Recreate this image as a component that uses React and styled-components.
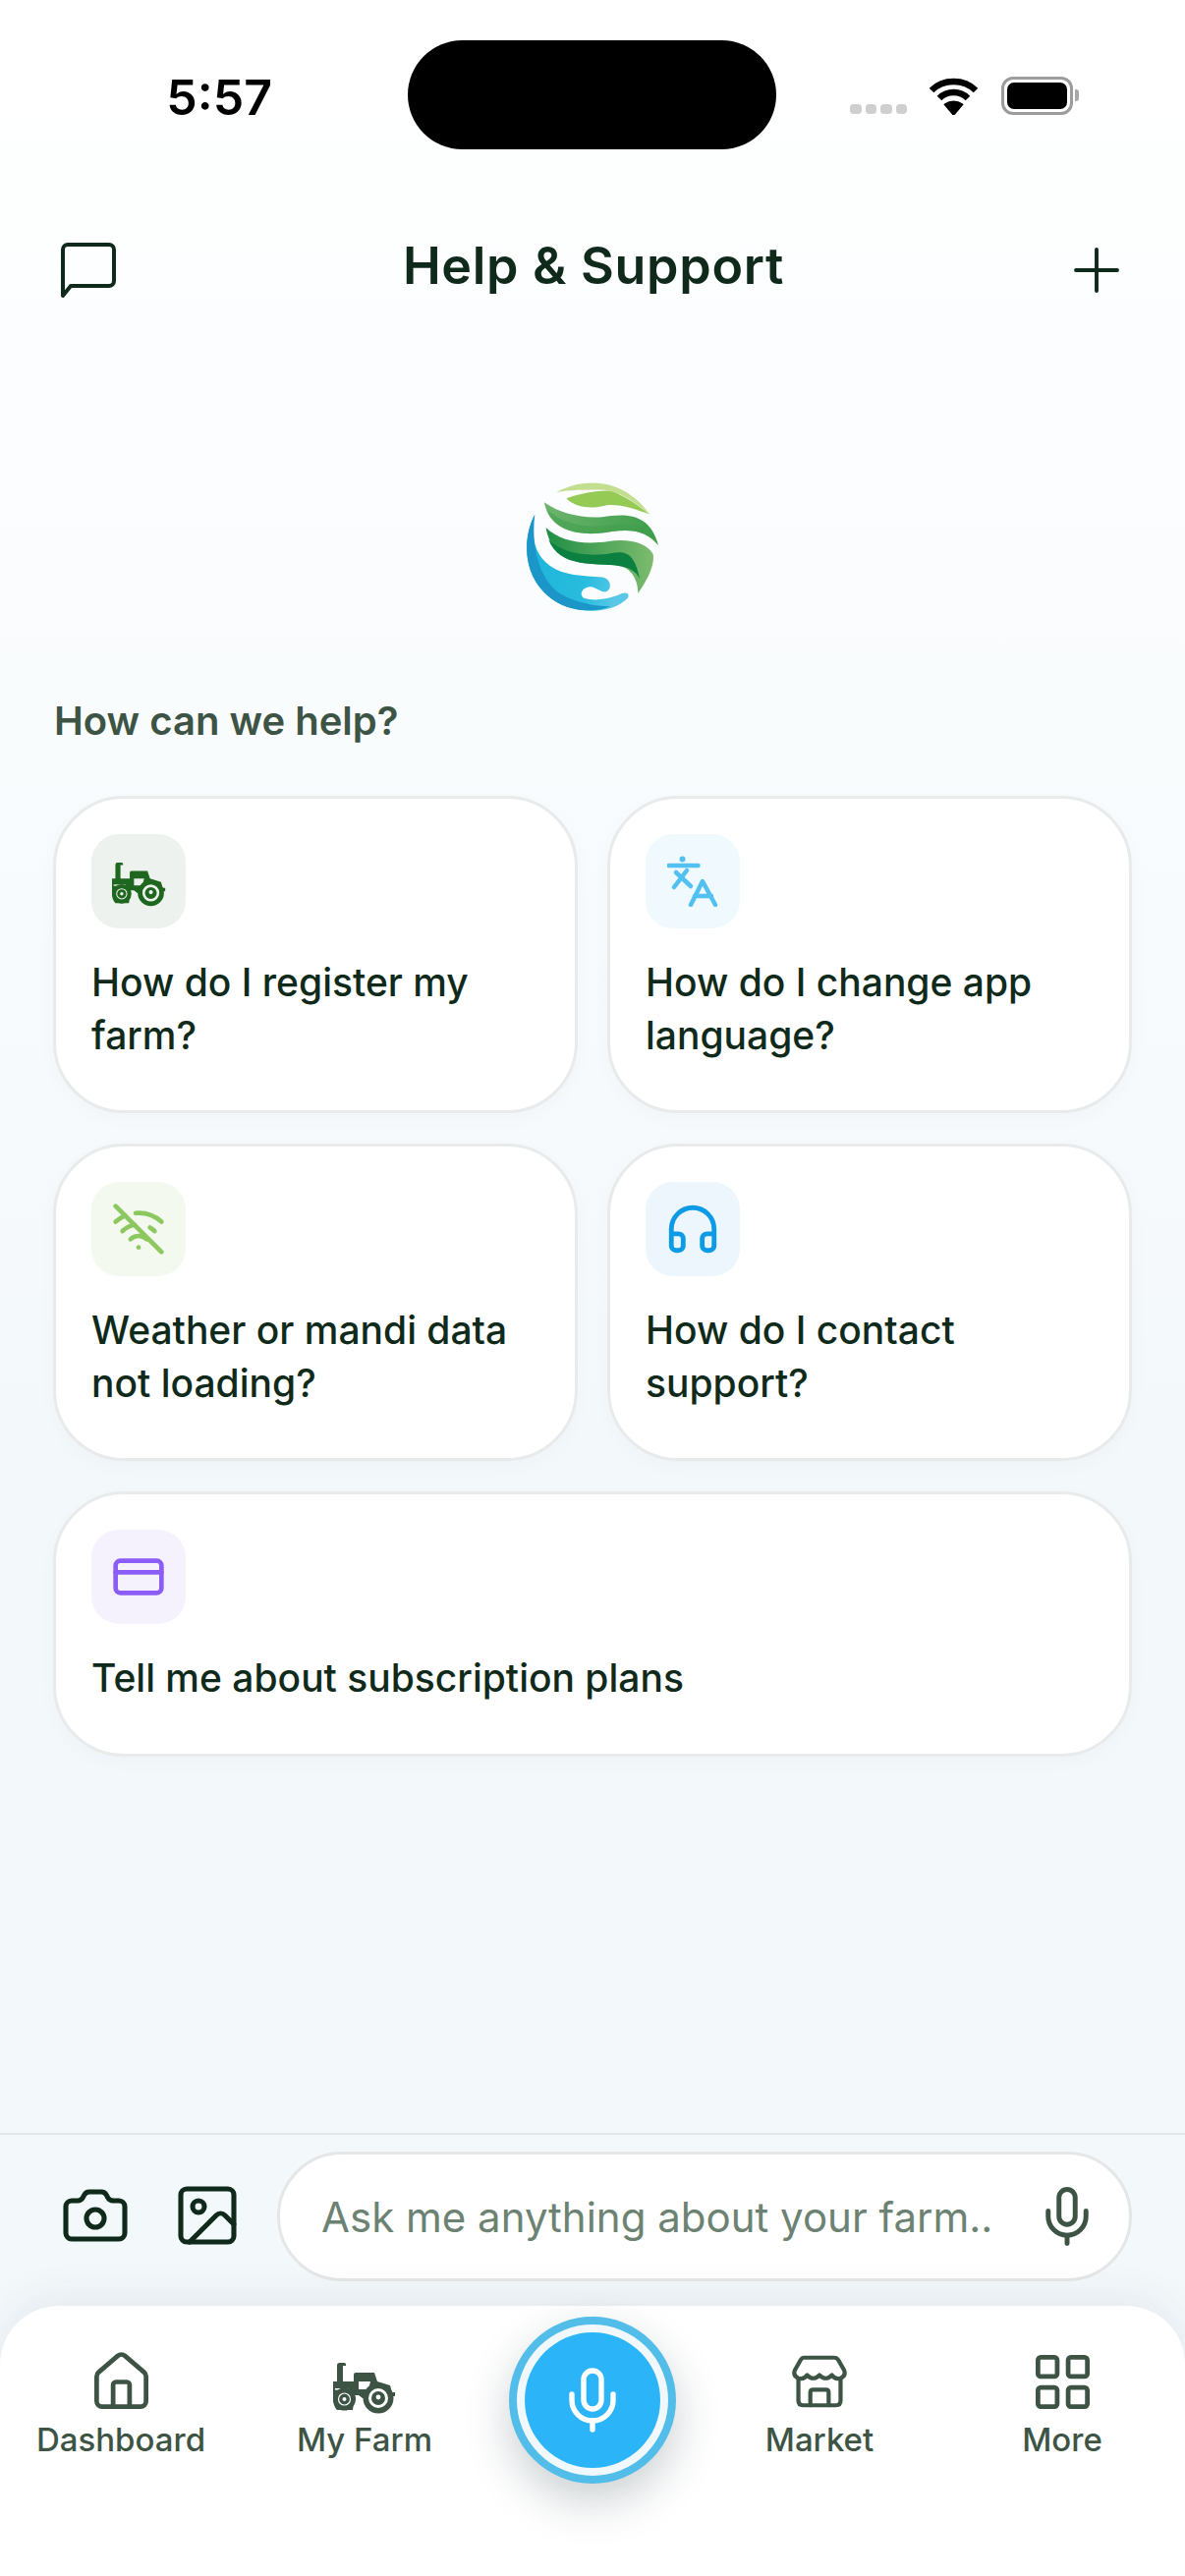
import React from "react"
import styled, { createGlobalStyle } from "styled-components"
import { Camera, CreditCard, Headphones, House, Image, LayoutGrid, Mic, Plus, WifiOff } from "lucide-react"

const GlobalStyle = createGlobalStyle`
  html, body {
    margin: 0;
    padding: 0;
    background: #f3f8fb;
  }
`

const Logo = () => (
  <LogoSvg viewBox="160 90 420 410">
    <defs>
      <linearGradient id="bandA" x1="0" y1="0" x2="1" y2="0.2">
        <stop offset="0" stopColor="#6fb56f" />
        <stop offset="1" stopColor="#3f9f4c" />
      </linearGradient>
      <linearGradient id="bandB" x1="0" y1="0" x2="1" y2="0">
        <stop offset="0" stopColor="#1f8e45" />
        <stop offset="1" stopColor="#7dbb6e" />
      </linearGradient>
      <linearGradient id="water" x1="0" y1="0" x2="1" y2="0.2">
        <stop offset="0" stopColor="#1ab4d8" />
        <stop offset="0.7" stopColor="#28bcde" />
        <stop offset="1" stopColor="#58c8e6" />
      </linearGradient>
    </defs>
    <path fill="#c3de8f" d="M258 130C330 88 460 75 545 197C490 150 440 122 395 122C350 122 300 122 258 130Z" />
    <path fill="#95cb55" d="M290 148C340 130 410 120 430 127C470 140 510 170 545 197C500 180 440 160 400 172C360 182 310 172 290 148Z" />
    <path fill="url(#bandA)" d="M222 160C270 195 340 210 400 205C470 195 545 190 572 292C540 250 490 240 430 250C350 265 240 260 222 160Z" />
    <path fill="#3f9f4c" d="M232 185C280 225 350 240 410 232C470 222 540 225 572 292C540 250 490 240 430 250C370 262 300 258 260 225C246 213 238 200 232 185Z" opacity="0.55" />
    <path fill="url(#bandB)" d="M227 238C270 280 340 292 420 280C480 270 540 285 556 320C562 360 530 410 510 440C510 400 490 360 450 355C380 345 250 370 227 238Z" />
    <path fill="#0b8041" d="M235 275C280 320 360 328 430 316C480 308 500 325 515 395C505 372 480 358 450 355C380 345 270 365 235 275Z" />
    <path fill="url(#water)" d="M193 198C150 280 160 400 250 460C310 500 420 510 478 455C485 440 475 435 460 440C430 455 380 465 345 455C325 445 340 415 370 420C385 425 395 435 410 435C430 430 430 395 400 390C340 385 280 385 240 355C190 320 180 260 193 198Z" />
    <path fill="#1c96c8" d="M193 198C150 280 160 400 250 460C300 495 370 500 425 480C380 480 320 470 270 440C210 400 180 300 193 198Z" />
  </LogoSvg>
)

const ChatIcon = () => (
  <svg width="58" height="58" viewBox="0 0 58 58" fill="none" stroke="#0f2a1a" strokeWidth="4" strokeLinejoin="round">
    <path d="M3 8a5 5 0 0 1 5-5h42a5 5 0 0 1 5 5v32a5 5 0 0 1-5 5H11L3 55Z" />
  </svg>
)

const WifiGlyph = () => (
  <svg width="51" height="38" viewBox="0 0 51 38" fill="none" stroke="#000" strokeWidth="6.5">
    <path d="M3 13C15 1 36 1 48 13" />
    <path d="M11 21C19 13 32 13 40 21" />
    <path d="M17.5 27.5C22 24 29 24 33.5 27.5L25.5 37Z" fill="#000" strokeWidth="3" />
  </svg>
)

const LanguageIcon = () => (
  <svg width="52" height="52" viewBox="0 0 52 52" fill="none" stroke="#52c0f0" strokeWidth="4.5" strokeLinecap="round" strokeLinejoin="round">
    <circle cx="15.5" cy="3.5" r="3" fill="#52c0f0" stroke="none" />
    <path d="M1.5 10h30" />
    <path d="M9 17l15 14" />
    <path d="M20 15 7 32" />
    <path d="M24 50 36 26l13 24" />
    <path d="M28 41h17" />
  </svg>
)

const TractorIcon = ({ color, cut, width = 64 }) => (
  <svg width={width} height={(width * 52) / 64} viewBox="0 0 64 52">
    <path fill={color} d="M4 2.5Q4 0 6.5 0H12Q13.5 1 13 3H10V20H4Z" />
    <path fill={color} d="M0 19H21V12Q21 10 23 10H42L45 19L58 23L60 30H63V34H59L56 36H30L26 33H22L20 48H4Q0 44 0 36Z" />
    <rect fill={cut} x="2" y="26" width="14" height="1.6" />
    <path fill={cut} d="M26 19H38L36 27H26Z" />
    <circle cx="11.5" cy="37" r="11.5" fill={color} />
    <circle cx="11.5" cy="37" r="6" fill="none" stroke={cut} strokeWidth="1.2" />
    <circle cx="11.5" cy="37" r="2" fill={cut} />
    <circle cx="46" cy="36" r="15.5" fill={color} />
    <circle cx="46" cy="36" r="8.5" fill="none" stroke={cut} strokeWidth="3" />
    <circle cx="46" cy="35" r="2.4" fill={cut} />
  </svg>
)

const StoreIcon = () => (
  <svg width="56" height="56" viewBox="0 0 60 58" fill="none" stroke="#3d5445" strokeWidth="4.5" strokeLinejoin="round" strokeLinecap="round">
    <path d="M13 3H46Q49 3 50.500 5.500L57 17Q59 23 53 25.500Q47 27.500 43.500 22Q37 29 30 22Q23 29 16.500 22Q13 27.500 7 25.500Q1 23 3 17L9.500 5.500Q11 3 13 3Z" />
    <path d="M7 26V50Q7 55 12 55H48Q53 55 53 50V26" />
    <path d="M20 55V41Q20 38 23 38H37Q40 38 40 41V55" />
  </svg>
)

const cards = [
  { label: "How do I register my farm?", tint: "#edf2ee", low: true, icon: <TractorIcon color="#1f661e" cut="#edf2ee" width={55} /> },
  { label: "How do I change app language?", tint: "#eff9fe", icon: <LanguageIcon /> },
  { label: "Weather or mandi data not loading?", tint: "#f4f9f0", icon: <WifiOff size={56} color="#8cc85f" strokeWidth={2} /> },
  { label: "How do I contact support?", tint: "#ecf6fc", icon: <Headphones size={58} color="#0d9be6" strokeWidth={2} /> },
  { label: "Tell me about subscription plans", tint: "#f5f2fe", icon: <CreditCard size={56} color="#8b5cf6" strokeWidth={2} />, wide: true },
]

const navLeft = [
  { label: "Dashboard", icon: <House size={67} color="#3d5445" strokeWidth={1.7} /> },
  { label: "My Farm", icon: <TractorIcon color="#3d5445" cut="#fff" />, low: true },
]

const navRight = [
  { label: "Market", icon: <StoreIcon /> },
  { label: "More", icon: <LayoutGrid size={67} color="#3d5445" strokeWidth={1.7} /> },
]

const NavEntry = ({ item }) => (
  <NavItem>
    <NavIcon $low={item.low}>{item.icon}</NavIcon>
    <NavLabel>{item.label}</NavLabel>
  </NavItem>
)

const App = () => (
  <Page>
    <GlobalStyle />
    <StatusBar>
      <Time>5:57</Time>
      <Island />
      <StatusIcons>
        <SignalDots>
          <i /><i /><i /><i />
        </SignalDots>
        <WifiGlyph />
        <Battery>
          <BatteryFill />
        </Battery>
      </StatusIcons>
    </StatusBar>

    <Header>
      <ChatIcon />
      <Title>Help &amp; Support</Title>
      <Plus size={72} color="#0f2a1a" strokeWidth={1.3} />
    </Header>

    <LogoRow>
      <Logo />
    </LogoRow>

    <Prompt>How can we help?</Prompt>

    <CardGrid>
      {cards.map((card) => (
        <Card key={card.label} $wide={card.wide}>
          <IconBox $tint={card.tint} $low={card.low}>{card.icon}</IconBox>
          <CardText>{card.label}</CardText>
        </Card>
      ))}
    </CardGrid>

    <Composer>
      <ComposerTools>
        <Camera size={72} color="#0f2a1a" strokeWidth={1.7} />
        <Image size={72} color="#0f2a1a" strokeWidth={1.7} />
      </ComposerTools>
      <InputPill>
        <Placeholder>Ask me anything about your farm..</Placeholder>
        <Mic size={66} color="#3d5445" strokeWidth={1.8} />
      </InputPill>
    </Composer>

    <Nav>
      {navLeft.map((item) => <NavEntry key={item.label} item={item} />)}
      <VoiceButton>
        <VoiceInner>
          <Mic size={72} color="#fff" strokeWidth={1.8} />
        </VoiceInner>
      </VoiceButton>
      {navRight.map((item) => <NavEntry key={item.label} item={item} />)}
    </Nav>
  </Page>
)

export default App

const Page = styled.div`
  width: 1206px;
  height: 2622px;
  overflow: hidden;
  display: flex;
  flex-direction: column;
  font-family: "Inter", "Liberation Sans", sans-serif;
  color: #0f2a1a;
  background: linear-gradient(180deg, #ffffff 0px, #fbfdfe 500px, #f3f8fb 1500px, #f3f8fb 100%);
`

const StatusBar = styled.div`
  height: 152px;
  padding-top: 41px;
  box-sizing: border-box;
  display: grid;
  grid-template-columns: 415px 375px 1fr;
  flex: none;
`

const Time = styled.div`
  font-size: 50px;
  font-weight: 600;
  color: #000;
  text-align: right;
  padding-right: 138px;
  line-height: 116px;
`

const Island = styled.div`
  height: 111px;
  border-radius: 56px;
  background: #000;
`

const StatusIcons = styled.div`
  display: flex;
  align-items: flex-end;
  padding: 0 0 35px 75px;
  height: 76px;
`

const SignalDots = styled.div`
  display: flex;
  gap: 4px;
  margin-right: 22px;
  margin-bottom: 1px;

  i {
    width: 11.5px;
    height: 10px;
    border-radius: 4px;
    background: #cfcfcf;
  }
`

const Battery = styled.div`
  position: relative;
  width: 73px;
  height: 39px;
  margin-left: 23px;
  box-sizing: border-box;
  border: 3px solid #9c9c9c;
  border-radius: 12px;
  padding: 3px;

  &::after {
    content: "";
    position: absolute;
    right: -9px;
    top: 10px;
    width: 4px;
    height: 12px;
    border-radius: 0 3px 3px 0;
    background: #a8a8a8;
  }
`

const BatteryFill = styled.div`
  height: 100%;
  border-radius: 7px;
  background: #000;
`

const Header = styled.div`
  height: 118px;
  margin-top: 64px;
  padding: 0 54px 0 61px;
  display: flex;
  align-items: center;
  justify-content: space-between;
  flex: none;
`

const Title = styled.h1`
  margin: 0 0 9px 9px;
  font-size: 52px;
  font-weight: 600;
  line-height: 60px;
  letter-spacing: 0.7px;
  color: #0f2a1a;
`

const LogoRow = styled.div`
  margin-top: 154px;
  display: flex;
  justify-content: center;
  flex: none;
`

const LogoSvg = styled.svg`
  width: 140px;
  height: 136px;
  display: block;
`

const Prompt = styled.div`
  margin: 87px 0 0 55px;
  font-size: 40px;
  line-height: 46px;
  font-weight: 600;
  color: #3d5445;
  flex: none;
`

const CardGrid = styled.div`
  margin-top: 53px;
  padding: 0 54px 0 54px;
  display: grid;
  grid-template-columns: 1fr 1fr;
  column-gap: 30px;
  row-gap: 31px;
  flex: 1;
  align-content: start;
`

const Card = styled.div`
  grid-column: ${(p) => (p.$wide ? "1 / span 2" : "auto")};
  box-sizing: border-box;
  padding: 36px 36px ${(p) => (p.$wide ? "50px" : "49px")};
  border: 3px solid #e8ebea;
  border-radius: 72px;
  background: #fff;
  box-shadow: 0 6px 20px rgba(30, 60, 70, 0.025);
`

const IconBox = styled.div`
  width: 96px;
  height: 96px;
  box-sizing: border-box;
  padding-top: ${(p) => (p.$low ? "7px" : "0")};
  border-radius: 28px;
  display: flex;
  align-items: center;
  justify-content: center;
  background: ${(p) => p.$tint};
`

const CardText = styled.div`
  margin-top: 28px;
  font-size: 39px;
  line-height: 54px;
  font-weight: 450;
  color: #0f2a1a;
`

const Composer = styled.div`
  height: 176px;
  box-sizing: border-box;
  border-top: 2px solid #e1e7ea;
  padding: 17px 54px 0 61px;
  display: flex;
  align-items: flex-start;
  gap: 45px;
  flex: none;
`

const ComposerTools = styled.div`
  display: flex;
  align-items: center;
  gap: 48px;
  margin-top: 29px;
  margin-right: -10px;

  svg {
    display: block;
    flex: none;
  }

  svg:first-child {
    margin-right: -6px;
  }
`

const InputPill = styled.div`
  flex: 1;
  height: 132px;
  box-sizing: border-box;
  border: 3px solid #e4e7e6;
  border-radius: 66px;
  background: #fff;
  display: flex;
  align-items: center;
  justify-content: space-between;
  padding: 0 30px 0 42px;
`

const Placeholder = styled.div`
  font-size: 42px;
  font-weight: 400;
  color: #6c8272;
  white-space: nowrap;
`

const Nav = styled.div`
  height: 275px;
  flex: none;
  position: relative;
  display: grid;
  grid-template-columns: 246px 250px 216px 244px 250px;
  border-radius: 60px 60px 0 0;
  background: #fff;
  box-shadow: 0 -10px 40px rgba(30, 50, 60, 0.07);
`

const NavItem = styled.div`
  display: flex;
  flex-direction: column;
  align-items: center;
  padding-top: 42px;
`

const NavIcon = styled.div`
  height: 70px;
  display: flex;
  align-items: center;
  justify-content: center;
  padding-top: ${(p) => (p.$low ? "14px" : "0")};
  box-sizing: border-box;
`

const NavLabel = styled.div`
  margin-top: 4px;
  font-size: 33px;
  line-height: 40px;
  font-weight: 450;
  color: #3d5445;
`

const VoiceButton = styled.div`
  justify-self: center;
  align-self: start;
  margin-top: 11px;
  margin-left: -3px;
  width: 170px;
  height: 170px;
  box-sizing: border-box;
  border-radius: 50%;
  border: 8px solid #53bdea;
  padding: 8px;
  background: #f0f8fc;
  box-shadow: 0 18px 46px rgba(20, 40, 50, 0.22);
`

const VoiceInner = styled.div`
  height: 100%;
  border-radius: 50%;
  background: #2bb5f8;
  display: flex;
  align-items: center;
  justify-content: center;
`
